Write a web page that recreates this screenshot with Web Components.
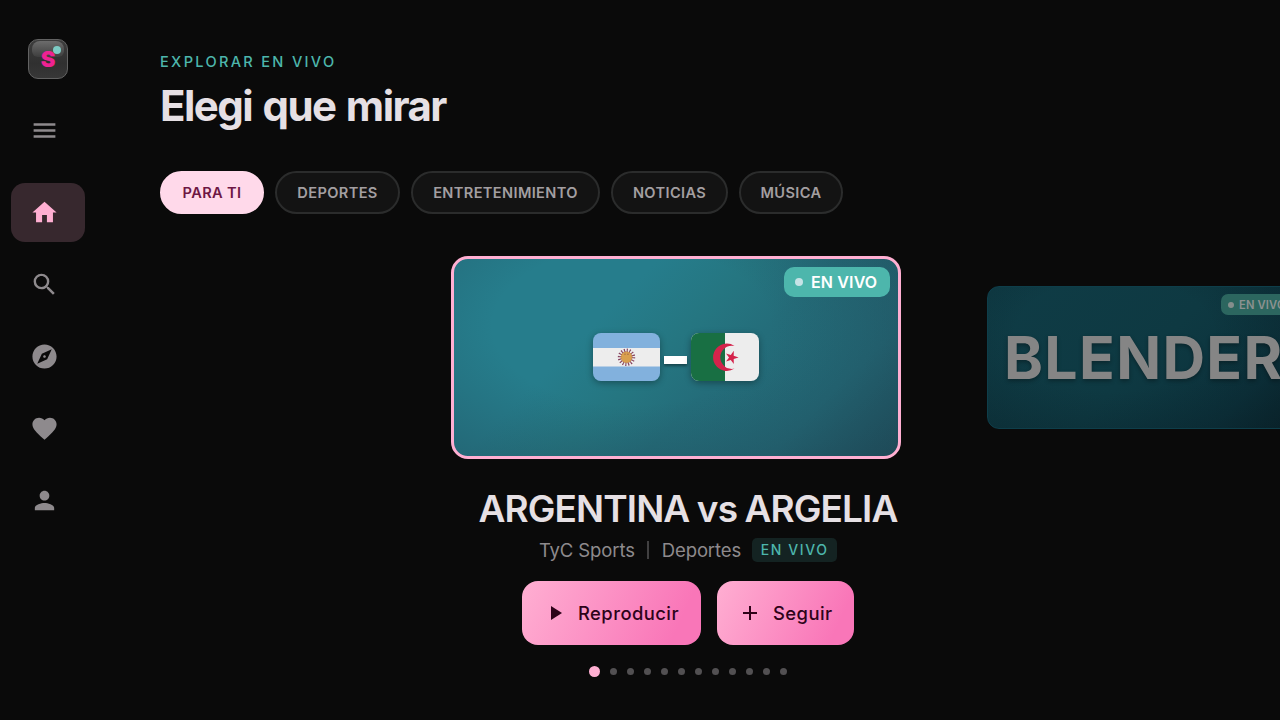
<!DOCTYPE html>
<html lang="es">
<head>
<meta charset="utf-8">
<title>Explorar en vivo</title>
<style>
  html,body{margin:0;height:100%;background:#0a0a0a;overflow:hidden}
  body{font-family:Inter,"Liberation Sans",sans-serif;color:#e6e0e4}
</style>
</head>
<body>
<tv-app></tv-app>
<script>
const ICONS={
  menu:'M3 18h18v-2H3v2zm0-5h18v-2H3v2zm0-7v2h18V6H3z',
  home:'M10 20v-6h4v6h5v-8h3L12 3 2 12h3v8z',
  search:'M15.5 14h-.79l-.28-.27A6.471 6.471 0 0 0 16 9.5 6.5 6.5 0 1 0 9.5 16c1.61 0 3.09-.59 4.23-1.57l.27.28v.79l5 4.99L20.49 19l-4.99-5zm-6 0C7.01 14 5 11.99 5 9.5S7.01 5 9.5 5 14 7.01 14 9.5 11.99 14 9.5 14z',
  explore:'M12 10.9c-.61 0-1.1.49-1.1 1.1s.49 1.1 1.1 1.1c.61 0 1.1-.49 1.1-1.1s-.49-1.1-1.1-1.1zM12 2C6.48 2 2 6.48 2 12s4.48 10 10 10 10-4.48 10-10S17.52 2 12 2zm2.19 12.19L6 18l3.81-8.19L18 6l-3.81 8.19z',
  heart:'M12 21.35l-1.45-1.32C5.4 15.36 2 12.28 2 8.5 2 5.42 4.42 3 7.5 3c1.74 0 3.41.81 4.5 2.09C13.09 3.81 14.76 3 16.5 3 19.58 3 22 5.42 22 8.5c0 3.78-3.4 6.86-8.55 11.54L12 21.35z',
  person:'M12 12c2.21 0 4-1.79 4-4s-1.79-4-4-4-4 1.79-4 4 1.79 4 4 4zm0 2c-2.67 0-8 1.34-8 4v2h16v-2c0-2.66-5.33-4-8-4z',
  play:'M8 5v14l11-7z',
  add:'M19 13h-6v6h-2v-6H5v-2h6V5h2v6h6v2z'
};

function define(name,html){
  customElements.define(name,class extends HTMLElement{
    constructor(){
      super();
      this.attachShadow({mode:'open'}).innerHTML=typeof html==='function'?html(this):html;
    }
  });
}

define('tv-icon',el=>`
  <style>:host{display:block;flex:none;width:29px;height:29px}svg{display:block;width:100%;height:100%;fill:currentColor}</style>
  <svg viewBox="0 0 24 24"><path d="${ICONS[el.getAttribute('name')]}"/></svg>`);

define('tv-logo',`
  <style>
    :host{display:grid;place-items:center;position:relative;width:40px;height:40px;box-sizing:border-box;border:1px solid #626262;border-radius:10px;
      background:linear-gradient(#3d3d3d,#303030 60%,#373737)}
    :host::before{content:"";position:absolute;left:3px;right:3px;top:1px;height:16px;border-radius:8px 8px 6px 6px;background:linear-gradient(#6c6c6c,#3e3e3e)}
    b{position:relative;font:900 22px/39px Inter,sans-serif;color:#ee2292}
    i{position:absolute;width:8px;height:8px;border-radius:50%;background:#7dccc5;left:24px;top:6px}
  </style>
  <b>S</b><i></i>`);

define('nav-item',`
  <style>
    :host{display:flex;align-items:center;width:74px;height:59px;box-sizing:border-box;padding-left:19px;border-radius:14px;color:#8e8a8d}
    :host([active]){background:#37282e;color:#ffafd2}
  </style>
  <slot></slot>`);

define('side-bar',`
  <style>
    :host{display:flex;flex-direction:column;flex:none;width:96px;height:720px;box-sizing:border-box;padding:39px 11px 0}
    tv-logo{margin-left:17px}
    nav{display:flex;flex-direction:column;gap:13px;margin-top:23px}
    .menu{height:56px;margin-bottom:12px}
  </style>
  <tv-logo></tv-logo>
  <nav>
    <nav-item class="menu"><tv-icon name="menu"></tv-icon></nav-item>
    <nav-item active><tv-icon name="home"></tv-icon></nav-item>
    <nav-item><tv-icon name="search"></tv-icon></nav-item>
    <nav-item><tv-icon name="explore"></tv-icon></nav-item>
    <nav-item><tv-icon name="heart"></tv-icon></nav-item>
    <nav-item><tv-icon name="person"></tv-icon></nav-item>
  </nav>`);

define('filter-chip',`
  <style>
    :host{display:flex;align-items:center;justify-content:center;height:43px;box-sizing:border-box;border:2px solid #2b2c2c;border-radius:22px;
      background:#131313;color:#a39fa1;font-size:14.6px;font-weight:600;letter-spacing:.36px;white-space:nowrap;padding-top:1px}
    :host([active]){background:#ffd9ea;border-color:#ffd9ea;color:#6e1744}
  </style>
  <slot></slot>`);

define('live-badge',`
  <style>
    :host{display:flex;align-items:center;gap:8px;position:absolute;top:8px;right:8px;width:106px;height:30px;box-sizing:border-box;padding-left:11px;
      border-radius:10px;background:#4db6ac;color:#fff;font-size:16px;font-weight:600;letter-spacing:.15px;white-space:nowrap}
    i{width:var(--dot-size,8px);height:var(--dot-size,8px);border-radius:50%;background:var(--dot,#c6e3e6)}
  </style>
  <i></i><span><slot>EN VIVO</slot></span>`);

define('flag-ar',`
  <style>:host{display:block;width:67px;height:48px;border-radius:8px;overflow:hidden;box-shadow:0 2px 7px #0005}svg{display:block}</style>
  <svg width="67" height="48" viewBox="0 0 67 48">
    <path fill="#82b1dd" d="M0 0h67v48H0z"/><path fill="#ededed" d="M0 15h67v18.5H0z"/>
    <circle cx="33.5" cy="24.3" r="7" fill="none" stroke="#87445f" stroke-width="3.4" stroke-dasharray="1.1 1.649"/>
    <circle cx="33.5" cy="24.3" r="5.7" fill="#d9a04e" stroke="#9a5847" stroke-width=".8" stroke-dasharray="1.2 1"/>
    <path d="M31.3 21.2h1.4m1.5 0h1.6" stroke="#955744" stroke-width=".8"/>
  </svg>`);

define('flag-dz',`
  <style>:host{display:block;width:68px;height:48px;border-radius:8px;overflow:hidden;box-shadow:0 2px 7px #0005}svg{display:block}</style>
  <svg width="68" height="48" viewBox="0 0 68 48">
    <path fill="#ededed" d="M0 0h68v48H0z"/><path fill="#186f43" d="M0 0h34v48H0z"/>
    <path fill="#d4234b" d="M43.5 13A13.7 13.7 0 1 0 43.5 35.6A11.6 11.6 0 1 1 43.5 13z"/>
    <path fill="#d4234b" d="M47.6 24.4L42.7 26 42.8 31 39.8 26.9 35 28.4 38 24.4 35 20.4 39.8 21.9 42.8 17.8 42.7 22.8z"/>
  </svg>`);

define('stream-card',`
  <style>
    :host{display:flex;align-items:center;justify-content:center;position:relative;flex:none;width:450px;height:203px;box-sizing:border-box;
      border:3px solid #ffafd2;border-radius:17px;padding:0 0 2px;
      background:radial-gradient(ellipse 78% 100% at 40% 34%,#1e3a4800 40%,#1e3a4870 100%),linear-gradient(135deg,#267d8c 0 32%,#257681 47%,#246d7a 60%,#236977 80%,#1f5664)}
    :host([side]){width:318px;height:143px;border:1px solid #0e3e4a;border-radius:12px;justify-content:flex-start;padding:0 0 1px 16px;
      background:radial-gradient(ellipse 78% 100% at 40% 34%,#07151b00 40%,#07151b77 110%),linear-gradient(135deg,#0f3c46,#0e3942 50%,#0c323c 80%,#0a272f)}
    :host([side]) live-badge{--dot:#858e8c;--dot-size:6px;width:75px;height:21px;top:7px;right:8px;padding-left:7px;gap:5px;border-radius:7px;font-size:11.2px;background:#2c665f;color:#8c9291}
  </style>
  <slot></slot><live-badge>EN VIVO</live-badge>`);

define('action-button',el=>`
  <style>
    :host{display:flex;align-items:center;height:64px;box-sizing:border-box;border-radius:16px;padding:0 0 1px 21px;
      background:linear-gradient(115deg,#ffafd2,#f976b8 85%);color:#2e0319;font-size:18.4px;font-weight:550;letter-spacing:.45px;white-space:nowrap}
    tv-icon{width:24px;height:24px;margin-right:11px;margin-top:1px}
  </style>
  <tv-icon name="${el.getAttribute('icon')}"></tv-icon><slot></slot>`);

define('page-dots',`
  <style>
    :host{display:flex;align-items:center;gap:10px;height:11px}
    i{width:7px;height:7px;border-radius:50%;background:#525052}
    i:first-of-type{width:11px;height:11px;background:#ffafd2}
  </style>${'<i></i>'.repeat(12)}`);

define('tv-app',`
  <style>
    :host{display:flex;width:1280px;height:720px;overflow:hidden}
    main{flex:1;min-width:0;display:flex;flex-direction:column;padding-top:52px}
    .eyebrow{margin-left:64px;font-size:14.6px;line-height:20px;font-weight:500;letter-spacing:2.3px;color:#4db6ac}
    h1{margin:8px 0 0 64px;font-size:42px;line-height:52px;font-weight:680;letter-spacing:-1.55px;word-spacing:2px}
    .chips{display:flex;gap:11px;margin:39px 0 0 64px}
    .track{display:flex;align-items:center;gap:86px;height:203px;margin-top:42px;padding-left:355px;overflow:hidden}
    .vs{width:23px;height:8px;margin:6px 4px 0;background:#fff;box-shadow:0 2px 3px #0006}
    .name{font-size:59px;font-weight:700;letter-spacing:1.3px;color:#858585;text-shadow:0 2px 4px #0005;white-space:nowrap}
    .info{display:flex;flex-direction:column;align-items:center}
    h2{margin:29px 0 0;font-size:37px;line-height:42px;font-weight:580;letter-spacing:-.9px;word-spacing:-1px;white-space:nowrap}
    .meta{display:flex;align-items:center;height:24px;margin-top:8px;font-size:18.5px;color:#8e8a8d;letter-spacing:-.12px}
    .meta i{width:2px;height:18px;background:#414041;margin:0 12.5px}
    .tag{width:85px;height:24px;line-height:24px;margin-left:11px;border-radius:5px;text-align:center;background:#142322;color:#4db6ac;font-size:14px;font-weight:500;letter-spacing:1.6px}
    .actions{display:flex;gap:16px;margin:19px 0 21px}
  </style>
  <side-bar></side-bar>
  <main>
    <div class="eyebrow">EXPLORAR EN VIVO</div>
    <h1>Elegi que mirar</h1>
    <div class="chips">
      <filter-chip active style="width:104px">PARA TI</filter-chip>
      <filter-chip style="width:125px">DEPORTES</filter-chip>
      <filter-chip style="width:189px">ENTRETENIMIENTO</filter-chip>
      <filter-chip style="width:117px">NOTICIAS</filter-chip>
      <filter-chip style="width:104px">MÚSICA</filter-chip>
    </div>
    <div class="track">
      <stream-card><flag-ar></flag-ar><div class="vs"></div><flag-dz></flag-dz></stream-card>
      <stream-card side><div class="name">BLENDER</div></stream-card>
    </div>
    <div class="info">
      <h2>ARGENTINA vs ARGELIA</h2>
      <div class="meta"><span>TyC Sports</span><i></i><span>Deportes</span><span class="tag">EN VIVO</span></div>
      <div class="actions">
        <action-button icon="play" style="width:179px">Reproducir</action-button>
        <action-button icon="add" style="width:137px">Seguir</action-button>
      </div>
      <page-dots></page-dots>
    </div>
  </main>`);
</script>
</body>
</html>
